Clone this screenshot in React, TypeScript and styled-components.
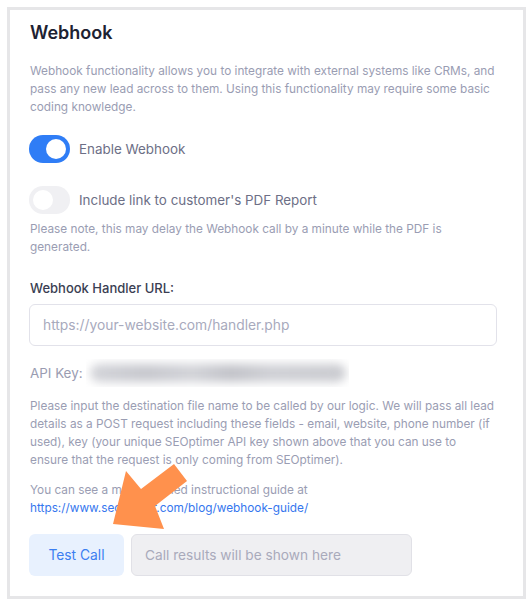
import React from "react";
import styled, { createGlobalStyle } from "styled-components";

const Global = createGlobalStyle`
  html, body { margin: 0; padding: 0; background: #ffffff; }
  body { font-family: Inter, "Noto Sans", sans-serif; -webkit-font-smoothing: antialiased; }
  * { box-sizing: border-box; }
`;

const Page = styled.div`
  padding: 7px 6px 7px 7px;
  width: 532px;
`;

const Card = styled.section`
  position: relative;
  width: 519px;
  height: 592px;
  border: 3px solid #e6e6e8;
  background: #fff;
  padding: 11px 26px 0 19px;
  display: flex;
  flex-direction: column;
`;

const Title = styled.h2`
  margin: 0 0 0 1px;
  font-size: 18px;
  line-height: 24px;
  font-weight: 600;
  color: #1d2232;
`;

const Text = styled.p<{ $mt: number }>`
  margin: ${(p) => p.$mt}px 0 0;
  padding-left: 1px;
  font-size: 11.8px;
  line-height: 18px;
  color: #9a9db3;
`;

const Link = styled.a`
  color: #3576ee;
  text-decoration: none;
`;

const ToggleRow = styled.label<{ $mt: number }>`
  display: flex;
  align-items: center;
  gap: 9px;
  margin-top: ${(p) => p.$mt}px;
  font-size: 13.4px;
  color: #6d6f86;
`;

const Switch = styled.span<{ $on: boolean }>`
  width: 41px;
  height: 28px;
  border-radius: 14px;
  background: ${(p) => (p.$on ? "#2f7df6" : "#f0f0f3")};
  display: flex;
  align-items: center;
  justify-content: ${(p) => (p.$on ? "flex-end" : "flex-start")};
  padding: 0 4px;
  flex-shrink: 0;
`;

const Knob = styled.span`
  width: 20px;
  height: 20px;
  border-radius: 50%;
  background: #fff;
`;

const FieldLabel = styled.div`
  margin-top: 23px;
  padding-left: 1px;
  font-size: 13px;
  line-height: 18px;
  font-weight: 500;
  color: #3a3e52;
`;

const Input = styled.div`
  margin-top: 7px;
  width: 468px;
  height: 42px;
  border: 1px solid #e2e2ea;
  border-radius: 6px;
  padding: 0 13px;
  display: flex;
  align-items: center;
  font-size: 13.8px;
  color: #a8aabd;
`;

const KeyRow = styled.div`
  margin-top: 13px;
  padding-left: 1px;
  display: flex;
  align-items: center;
  gap: 3px;
  height: 28px;
  font-size: 13.4px;
  color: #9a9cb1;
`;

const Blur = styled.div`
  width: 263px;
  height: 28px;
  background: #fff;
  overflow: hidden;
  display: flex;
  align-items: center;
`;

const BlurInner = styled.div`
  margin-left: 4px;
  width: 256px;
  height: 18px;
  border-radius: 9px;
  background: linear-gradient(90deg, #d3d4d9 0%, #c7c8ce 22%, #d2d3d8 40%, #c2c3c9 55%, #d0d1d6 72%, #c9cacf 100%);
  filter: blur(5px);
`;

const Actions = styled.div`
  margin-top: 17px;
  display: flex;
  gap: 7px;
`;

const TestButton = styled.button`
  width: 95px;
  height: 42px;
  border: none;
  border-radius: 6px;
  background: #e8f1fe;
  color: #3c7ef1;
  font-family: inherit;
  font-size: 13.8px;
  padding: 0;
`;

const Result = styled.div`
  width: 281px;
  height: 42px;
  border: 1px solid #e1e1e7;
  border-radius: 6px;
  background: #efeff2;
  display: flex;
  align-items: center;
  padding: 0 13px;
  font-size: 13.7px;
  color: #a9aabb;
`;

const ArrowSvg = styled.svg`
  position: absolute;
  left: -10px;
  top: -10px;
  pointer-events: none;
`;

export default function App() {
  return (
    <Page>
      <Global />
      <Card>
        <Title>Webhook</Title>
        <Text $mt={17}>
          Webhook functionality allows you to integrate with external systems like CRMs, and pass any new lead across
          to them. Using this functionality may require some basic coding knowledge.
        </Text>
        <ToggleRow $mt={19}>
          <Switch $on>
            <Knob />
          </Switch>
          Enable Webhook
        </ToggleRow>
        <ToggleRow $mt={23}>
          <Switch $on={false}>
            <Knob />
          </Switch>
          Include link to customer's PDF Report
        </ToggleRow>
        <Text $mt={6}>Please note, this may delay the Webhook call by a minute while the PDF is generated.</Text>
        <FieldLabel>Webhook Handler URL:</FieldLabel>
        <Input>https://your-website.com/handler.php</Input>
        <KeyRow>
          API Key:
          <Blur>
            <BlurInner />
          </Blur>
        </KeyRow>
        <Text $mt={10}>
          Please input the destination file name to be called by our logic. We will pass all lead details as a POST
          request including these fields - email, website, phone number (if used), key (your unique SEOptimer API key
          shown above that you can use to ensure that the request is only coming from SEOptimer).
        </Text>
        <Text $mt={12}>
          You can see a more detailed instructional guide at
          <br />
          <Link href="#">https://www.seoptimer.com/blog/webhook-guide/</Link>
        </Text>
        <Actions>
          <TestButton>Test Call</TestButton>
          <Result>Call results will be shown here</Result>
        </Actions>
        <ArrowSvg width="532" height="606" viewBox="0 0 532 606">
          <polygon
            points="113,524 126,471 141,489 174,464 187,481 155,506 164,529"
            fill="#ff914d"
          />
        </ArrowSvg>
      </Card>
    </Page>
  );
}
